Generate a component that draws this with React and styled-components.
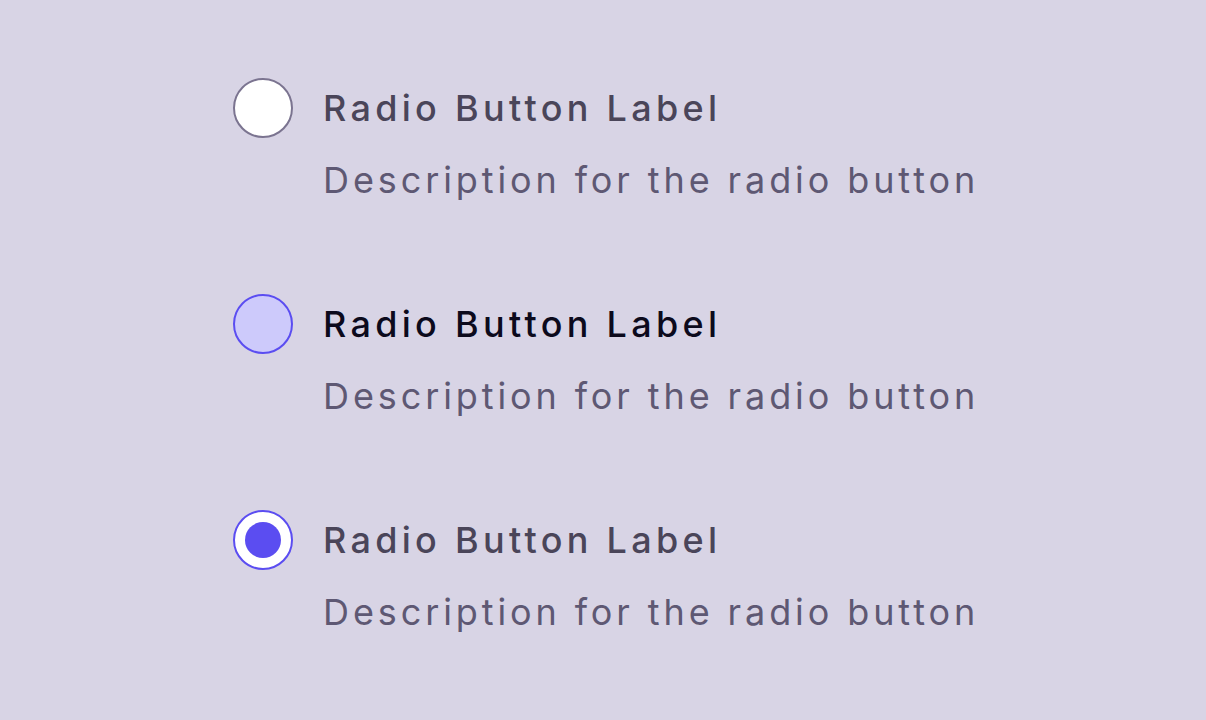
import React from 'react';
import styled, { createGlobalStyle } from 'styled-components';

const Global = createGlobalStyle`
  html, body {
    margin: 0;
    padding: 0;
    background: #d8d4e5;
  }
  body {
    font-family: Inter, "Noto Sans", sans-serif;
  }
`

const Page = styled.div`
  width: 1206px;
  height: 720px;
  box-sizing: border-box;
  padding: 78px 0 0 233px;
  display: flex;
  flex-direction: column;
  gap: 92px;
`

const Row = styled.label`
  display: flex;
  flex-direction: row;
  gap: 30px;
  align-items: flex-start;
  cursor: pointer;
`

const Circle = styled.span`
  width: 60px;
  height: 60px;
  box-sizing: border-box;
  border-radius: 50%;
  flex-shrink: 0;
  display: flex;
  align-items: center;
  justify-content: center;
  border: 2.5px solid ${p => (p.state === 'idle' ? '#7b7490' : '#5b4df1')};
  background: ${p => (p.state === 'hover' ? '#cdcafb' : '#ffffff')};
`

const Dot = styled.span`
  width: 36px;
  height: 36px;
  border-radius: 50%;
  background: #5b4df1;
`

const Texts = styled.div`
  display: flex;
  flex-direction: column;
`

const Label = styled.div`
  font-size: 36px;
  font-weight: 500;
  line-height: 60px;
  letter-spacing: 4.3px;
  color: ${p => (p.dark ? '#0c0a1c' : '#4a4559')};
`

const Desc = styled.div`
  font-size: 36px;
  font-weight: 400;
  line-height: 44px;
  margin-top: 20px;
  letter-spacing: 3.9px;
  color: #5e5873;
`

const items = [
  { state: 'idle' },
  { state: 'hover' },
  { state: 'checked' },
]

export default function App() {
  return (
    <>
      <Global />
      <Page>
        {items.map((it, i) => (
          <Row key={i}>
            <Circle state={it.state}>{it.state === 'checked' && <Dot />}</Circle>
            <Texts>
              <Label dark={it.state === 'hover'}>Radio Button Label</Label>
              <Desc>Description for the radio button</Desc>
            </Texts>
          </Row>
        ))}
      </Page>
    </>
  )
}
